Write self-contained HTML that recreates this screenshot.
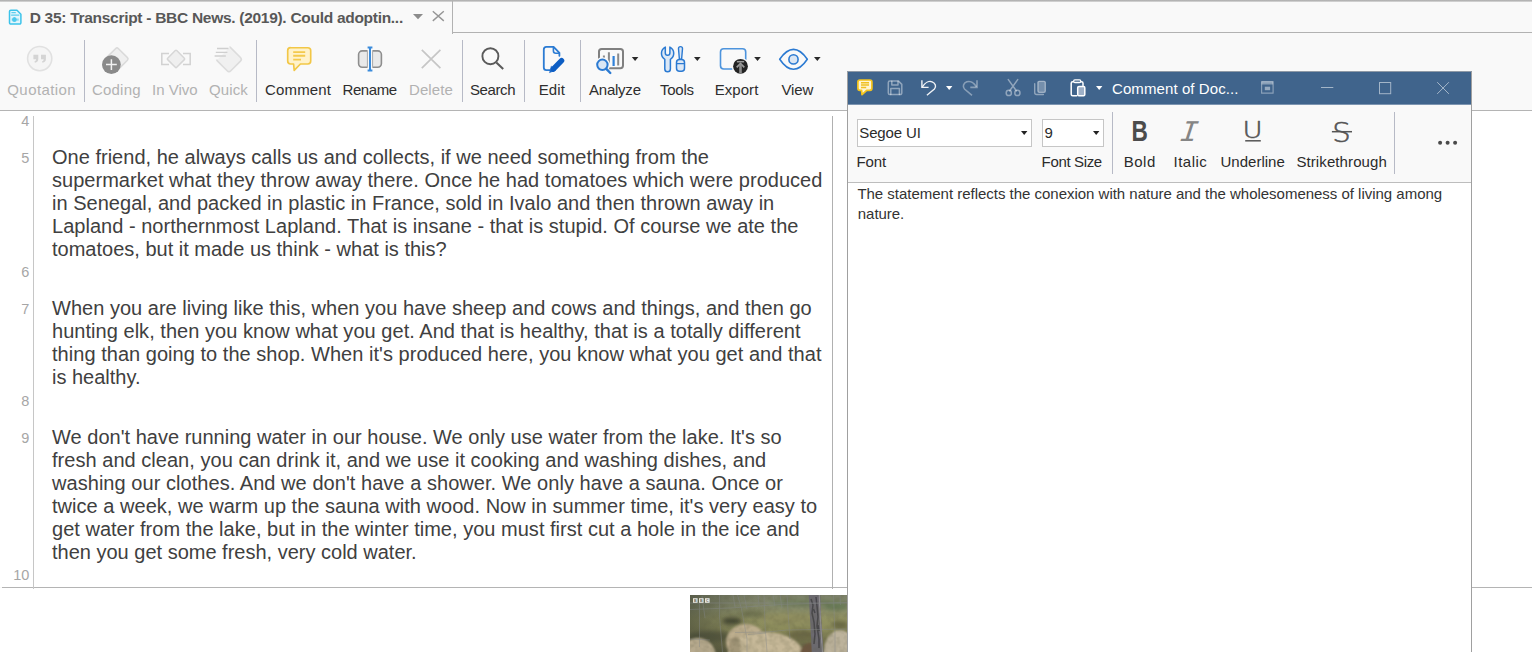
<!DOCTYPE html>
<html>
<head>
<meta charset="utf-8">
<title>D 35: Transcript</title>
<style>
html,body{margin:0;padding:0}
body{width:1532px;height:652px;overflow:hidden;position:relative;background:#f9f9f9;font-family:"Liberation Sans",sans-serif;color:#333}
.abs{position:absolute}
#topline{left:0;top:0;width:1532px;height:2px;background:linear-gradient(#a6a6a6,#dcdcdc)}
#tabtitle{top:9.4px;font-size:15.5px;font-weight:700;color:#585858;white-space:pre;line-height:18px}
#tabr{left:452px;top:1px;width:1px;height:33px;background:#b2b2b2}
#tabb{left:452px;top:32px;width:1080px;height:1px;background:#b2b2b2}
#tbline{left:0;top:110px;width:1532px;height:1px;background:#b4b4b4}
.sep{position:absolute;top:40px;width:1px;height:62px;background:#b7bac6}
.lbl{position:absolute;top:80.6px;font-size:15px;line-height:18px;white-space:pre;color:#2e2e2e}
.dis{color:#b2b2b2}
#doc{left:0;top:111px;width:847px;height:476px;background:#fff}
#docb{left:2px;top:587px;width:1530px;height:1px;background:#b4b4b4}
#below{left:0;top:588px;width:1532px;height:64px;background:#fff}
#gut{left:33px;top:116px;width:1px;height:473px;background:#c6c6c6}
#rline{left:832px;top:116px;width:1px;height:473px;background:#b0b0b0}
.ln{position:absolute;left:0;width:29.3px;text-align:right;font-size:14.5px;line-height:16px;color:#a6a6a6}
.tl{position:absolute;left:52px;font-size:20px;line-height:23px;white-space:pre;color:#404040}
#rightw{left:1472px;top:111px;width:60px;height:476px;background:#fff}
#cw{left:847px;top:71px;width:625px;height:581px;background:#fff}
#cwt{left:0;top:0;width:625px;height:33px;background:#40648c;border-top:1px solid #8e99a6;box-sizing:border-box}
#cwt2{left:0;top:33px;width:625px;height:1px;background:#7d95b1}
#cwr{left:1px;top:34px;width:623px;height:77px;background:#f9f9f9}
#cwrb{left:1px;top:111px;width:623px;height:1px;background:#bdbdbd}
#cwl{left:0;top:1px;width:1px;height:580px;background:#a0a0a0}
#cwrt{left:624px;top:1px;width:1px;height:580px;background:#a0a0a0}
.wt{position:absolute;font-size:15px;line-height:18px;white-space:pre;color:#2b2b2b}
.cb{position:absolute;top:119px;height:28px;box-sizing:border-box;background:#fff;border:1px solid #c6c6c6}
.rsep{position:absolute;top:112px;width:1px;height:62px;background:#b7bac6}
#svgo{left:0;top:0;width:1532px;height:652px;pointer-events:none}
</style>
</head>
<body>
<div id="topline" class="abs"></div>
<div id="tabtitle" class="abs" style="left:29.7px;letter-spacing:-0.287px">D 35: Transcript - BBC News. (2019). Could adoptin...</div>
<div id="tabr" class="abs"></div>
<div id="tabb" class="abs"></div>

<div class="lbl dis" style="left:7.3px;letter-spacing:.41px">Quotation</div>
<div class="sep" style="left:84px"></div>
<div class="lbl dis" style="left:92px;letter-spacing:.2px">Coding</div>
<div class="lbl dis" style="left:152px">In Vivo</div>
<div class="lbl dis" style="left:209px;letter-spacing:.12px">Quick</div>
<div class="sep" style="left:256px"></div>
<div class="lbl" style="left:265px;letter-spacing:.17px">Comment</div>
<div class="lbl" style="left:342.5px;letter-spacing:-.42px">Rename</div>
<div class="lbl dis" style="left:409px;letter-spacing:.1px">Delete</div>
<div class="sep" style="left:462px"></div>
<div class="lbl" style="left:470px;letter-spacing:-.4px">Search</div>
<div class="sep" style="left:524px"></div>
<div class="lbl" style="left:538.7px;letter-spacing:.1px">Edit</div>
<div class="sep" style="left:580px"></div>
<div class="lbl" style="left:589px;letter-spacing:-.23px">Analyze</div>
<div class="lbl" style="left:660px;letter-spacing:-.25px">Tools</div>
<div class="lbl" style="left:714.7px;letter-spacing:.06px">Export</div>
<div class="lbl" style="left:781.4px;letter-spacing:-.13px">View</div>
<div id="tbline" class="abs"></div>

<div id="doc" class="abs"></div>
<div id="below" class="abs"></div>
<div id="rightw" class="abs"></div>
<div id="docb" class="abs"></div>
<div id="gut" class="abs"></div>
<div id="rline" class="abs"></div>

<div class="ln" style="top:113px">4</div>
<div class="ln" style="top:149.5px">5</div>
<div class="ln" style="top:264px">6</div>
<div class="ln" style="top:301px">7</div>
<div class="ln" style="top:393px">8</div>
<div class="ln" style="top:430px">9</div>
<div class="ln" style="top:567px">10</div>

<div class="tl" style="top:146px;letter-spacing:0.015px">One friend, he always calls us and collects, if we need something from the</div>
<div class="tl" style="top:169px;letter-spacing:0.028px">supermarket what they throw away there. Once he had tomatoes which were produced</div>
<div class="tl" style="top:192px;letter-spacing:0.022px">in Senegal, and packed in plastic in France, sold in Ivalo and then thrown away in</div>
<div class="tl" style="top:215px;letter-spacing:0.023px">Lapland - northernmost Lapland. That is insane - that is stupid. Of course we ate the</div>
<div class="tl" style="top:238px">tomatoes, but it made us think - what is this?</div>

<div class="tl" style="top:297px;letter-spacing:0.018px">When you are living like this, when you have sheep and cows and things, and then go</div>
<div class="tl" style="top:320px;letter-spacing:0.037px">hunting elk, then you know what you get. And that is healthy, that is a totally different</div>
<div class="tl" style="top:343px;letter-spacing:0.035px">thing than going to the shop. When it's produced here, you know what you get and that</div>
<div class="tl" style="top:366px">is healthy.</div>

<div class="tl" style="top:426px;letter-spacing:0.016px">We don't have running water in our house. We only use water from the lake. It's so</div>
<div class="tl" style="top:449px;letter-spacing:0.034px">fresh and clean, you can drink it, and we use it cooking and washing dishes, and</div>
<div class="tl" style="top:472px;letter-spacing:0.048px">washing our clothes. And we don't have a shower. We only have a sauna. Once or</div>
<div class="tl" style="top:495px;letter-spacing:0.026px">twice a week, we warm up the sauna with wood. Now in summer time, it's very easy to</div>
<div class="tl" style="top:518px;letter-spacing:0.020px">get water from the lake, but in the winter time, you must first cut a hole in the ice and</div>
<div class="tl" style="top:541px">then you get some fresh, very cold water.</div>

<svg class="abs" style="left:690px;top:595px" width="157" height="57" viewBox="0 0 157 57">
<defs>
<linearGradient id="gr" x1="0" y1="0" x2="0" y2="1">
<stop offset="0" stop-color="#7c816a"/><stop offset=".2" stop-color="#858a6c"/><stop offset=".42" stop-color="#929362"/><stop offset=".62" stop-color="#8a8a5a"/><stop offset=".8" stop-color="#74734c"/><stop offset="1" stop-color="#5c5b3e"/>
</linearGradient>
<linearGradient id="lf" x1="0" y1="0" x2="1" y2="0">
<stop offset="0" stop-color="#3c4034" stop-opacity=".55"/><stop offset=".28" stop-color="#4a4e3c" stop-opacity=".2"/><stop offset=".5" stop-color="#4a4e3c" stop-opacity="0"/>
</linearGradient>
<filter id="b1" x="-20%" y="-20%" width="140%" height="140%"><feGaussianBlur stdDeviation="1.1"/></filter>
<filter id="b2" x="-20%" y="-20%" width="140%" height="140%"><feGaussianBlur stdDeviation="2.2"/></filter>
<filter id="b0" x="-20%" y="-20%" width="140%" height="140%"><feGaussianBlur stdDeviation=".45"/></filter>
<filter id="nz" x="0" y="0" width="100%" height="100%"><feTurbulence type="fractalNoise" baseFrequency=".16" numOctaves="2" seed="4" result="n"/><feColorMatrix in="n" type="matrix" values="0 0 0 0 .1  0 0 0 0 .1  0 0 0 0 .05  .9 .9 .9 0 -1.1"/></filter>
</defs>
<rect width="157" height="57" fill="url(#gr)"/>
<g filter="url(#b2)">
<ellipse cx="62" cy="19" rx="14" ry="2.5" fill="#6a6e4c"/>
<ellipse cx="118" cy="8" rx="40" ry="3.5" fill="#6f7d5c"/>
<ellipse cx="100" cy="24" rx="30" ry="5" fill="#8f8d5f"/>
<ellipse cx="42" cy="26" rx="10" ry="3.2" fill="#3a3c2c"/>
<ellipse cx="146" cy="12" rx="12" ry="3" fill="#667a55"/>
<ellipse cx="112" cy="40" rx="14" ry="5" fill="#6a6844"/>
<ellipse cx="20" cy="42" rx="22" ry="6" fill="#595a3d"/>
<ellipse cx="150" cy="30" rx="8" ry="4" fill="#6b6a45"/>
</g>
<rect width="157" height="57" fill="url(#lf)"/>
<g filter="url(#b1)">
<ellipse cx="56" cy="47" rx="20" ry="18" fill="#bdae8e"/>
<ellipse cx="76" cy="63" rx="39" ry="26" fill="#c6b898"/>
<ellipse cx="8" cy="62" rx="18" ry="19" fill="#b7aa8e"/>
<ellipse cx="150" cy="60" rx="17" ry="25" fill="#bdb39c"/>
<ellipse cx="120" cy="58" rx="10" ry="10" fill="#6d5640"/>
<ellipse cx="45" cy="52" rx="6" ry="10" fill="#8b7f63" opacity=".6"/>
</g>
<g filter="url(#b0)">
<path d="M118.7 0h11.6l1 24 2.2 33h-11.8l-1.5-30z" fill="#6c6a6f"/>
<path d="M121 4l2 6-1 8 2 9 1 12-1 10M126 2l1 9 1 11-1 9 2 13 0 9M123.5 14l1.5 4M128 30l1 6" stroke="#3e3d42" stroke-width="1.5" fill="none" opacity=".8"/>
<path d="M129.3 0l1 24 2.2 33" stroke="#a5a3a6" stroke-width="1.2" fill="none" opacity=".7"/>
</g>
<rect width="157" height="57" filter="url(#nz)" opacity=".28"/>
<g stroke="#85888a" stroke-width=".7" fill="none" opacity=".6" filter="url(#b0)">
<path d="M9.5 8v44M29.5 0v22l3 35M47.5 0l4 14 5.5 30v13M74 0l1 30 2 27M97 0l1.5 24 1.5 20M143.5 0l1.5 40v17M12 1l3 22M54 0l3 14M83 0l2 11M90 0l2 13M43 0l2 12M68 0l1 10M150 0l.5 10"/>
<path d="M0 14.5l40-1.5 50-3.5 67-2M0 8h157M45 37.5l32-.5 20-2 60-1M0 44l20 1M58 39.5l18-1.5"/>
</g>
<g font-family="Liberation Sans,sans-serif" font-size="3.6" font-weight="700" text-anchor="middle" fill="#6a6c5c">
<rect x="3" y="3.2" width="4.6" height="4.6" fill="#e9e9e3"/><text x="5.3" y="6.9">B</text>
<rect x="9" y="3.2" width="4.6" height="4.6" fill="#e9e9e3"/><text x="11.3" y="6.9">B</text>
<rect x="15" y="3.2" width="4.6" height="4.6" fill="#e9e9e3"/><text x="17.3" y="6.9">C</text>
</g>
</svg>


<div id="cw" class="abs">
<div id="cwt" class="abs"></div>
<div id="cwt2" class="abs"></div>
<div id="cwr" class="abs"></div>
<div id="cwrb" class="abs"></div>
<div id="cwl" class="abs"></div>
<div id="cwrt" class="abs"></div>
</div>
<div class="wt" style="left:1112px;top:79.6px;color:#fff;letter-spacing:.09px">Comment of Doc...</div>
<div class="cb" style="left:857px;width:175px"></div>
<div class="cb" style="left:1042px;width:62px"></div>
<div class="wt" style="left:859.3px;top:124.1px;letter-spacing:-.14px">Segoe UI</div>
<div class="wt" style="left:1044.5px;top:124.1px">9</div>
<div class="wt" style="left:856.6px;top:153.3px;letter-spacing:-.17px">Font</div>
<div class="wt" style="left:1041.6px;top:153.3px;letter-spacing:-.35px">Font Size</div>
<div class="rsep" style="left:1112px"></div>
<div class="wt" style="left:1123.8px;top:152.5px;letter-spacing:.47px">Bold</div>
<div class="wt" style="left:1173.5px;top:152.5px;letter-spacing:.5px">Italic</div>
<div class="wt" style="left:1220.5px;top:152.5px;letter-spacing:.01px">Underline</div>
<div class="wt" style="left:1296.4px;top:152.5px;letter-spacing:.1px">Strikethrough</div>
<div class="rsep" style="left:1394px"></div>
<div class="wt" style="left:857.4px;top:184.6px;letter-spacing:-.017px;color:#333">The statement reflects the conexion with nature and the wholesomeness of living among</div>
<div class="wt" style="left:857.8px;top:204.7px;letter-spacing:-.035px;color:#333">nature.</div>

<svg id="svgo" class="abs" width="1532" height="652" viewBox="0 0 1532 652" fill="none" stroke-linecap="round" stroke-linejoin="round">
<!-- tab doc icon -->
<path d="M10.8 10.3h6.2l3.9 3.9v8.6a1.3 1.3 0 0 1-1.3 1.3h-8.8a1.3 1.3 0 0 1-1.3-1.3v-11.2a1.3 1.3 0 0 1 1.3-1.3z" fill="#e3f6fc" stroke="#3cc3ea" stroke-width="1.5"/>
<path d="M11.8 12.7h3.6" stroke="#3cc3ea" stroke-width="1"/>
<path d="M11.6 15.1h7.2" stroke="#5ccdee" stroke-width="1.4"/>
<path d="M11.6 19.6h7.2" stroke="#8fdcf3" stroke-width="2.2" stroke-linecap="butt"/>
<ellipse cx="14.4" cy="19.6" rx="2.3" ry="2.5" fill="#4cc8ec"/>
<!-- tab dropdown and close -->
<path d="M413 14.1h10l-5 5.1z" fill="#8c8c8c"/>
<path d="M432.8 11.3l11 9.6M443.8 11.3l-11 9.6" stroke="#969696" stroke-width="1.4" stroke-linecap="butt"/>

<!-- Quotation -->
<circle cx="39.7" cy="58.6" r="12.1" fill="#f5f5f5" stroke="#e1e1e1" stroke-width="1.6"/>
<path d="M33.4 54.7h4.9v4.3q0 3.2-3.4 3.8l-.5-1.3q1.6-.5 1.7-2.3h-2.7z" fill="#d4d4d4"/>
<path d="M41 54.7h4.9v4.3q0 3.2-3.4 3.8l-.5-1.3q1.6-.5 1.7-2.3h-2.7z" fill="#d4d4d4"/>

<!-- Coding -->
<rect x="-8.3" y="-8.3" width="16.6" height="16.6" rx="1.8" transform="translate(117 58.9) rotate(45)" fill="#efefef" stroke="#dadada" stroke-width="1.5"/>
<circle cx="111.4" cy="64.6" r="9.4" fill="#8a8a8a"/>
<path d="M106 64.6h10.8M111.400 59.2v10.8" stroke="#f2f2f2" stroke-width="1.5" stroke-linecap="butt"/>

<!-- In Vivo -->
<path d="M169 53.4h-7.2v11h7.2M183 53.4h7.2v11h-7.2" stroke="#d2d2d2" stroke-width="1.5" stroke-linecap="butt" stroke-linejoin="miter"/>
<rect x="-6.4" y="-6.4" width="12.8" height="12.8" rx="1" transform="translate(176 58.9) rotate(45)" fill="#efefef" stroke="#d6d6d6" stroke-width="1.5"/>

<!-- Quick -->
<rect x="-9.4" y="-9.4" width="18.8" height="18.8" rx="2.6" transform="translate(229 59.3) rotate(45)" fill="#f0f0f0" stroke="#dcdcdc" stroke-width="1.6"/>
<path d="M212 44.5h17.5v3l-12 12h-5.5z" fill="#f9f9f9"/>
<path d="M217 48.5h11.5M215.8 52.3h11.6M214.6 56h11.2" stroke="#cfcfcf" stroke-width="1.3" stroke-linecap="butt"/>

<!-- Comment -->
<path d="M290.6 47.7h17.2a2.9 2.9 0 0 1 2.9 2.9v10.5a2.9 2.9 0 0 1-2.9 2.9h-7.4l-6.2 6.3-.6-6.3h-3a2.9 2.9 0 0 1-2.9-2.9v-10.5a2.9 2.9 0 0 1 2.9-2.9z" fill="#fff2cb" stroke="#f2c747" stroke-width="1.65"/>
<path d="M293.2 52.1h12M293.2 55.8h12M293.2 59.6h7.8" stroke="#f4c94c" stroke-width="1.9" stroke-linecap="butt"/>

<!-- Rename -->
<rect x="358.6" y="50.9" width="22.8" height="16.3" rx="3.6" fill="#e9e9e9" stroke="#8e8e8e" stroke-width="1.6"/>
<rect x="367.6" y="49" width="4.8" height="20" fill="#f9f9f9" stroke="none"/>
<path d="M367.400 51.2v15.7M372.600 51.2v15.7" stroke="#a8a8a8" stroke-width="1" stroke-linecap="butt"/>
<path d="M370 47.6v22.8M367.6 47.6h4.8M367.6 70.4h4.8" stroke="#3b8bdb" stroke-width="2" stroke-linecap="butt"/>

<!-- Delete -->
<path d="M421.8 49.8l18.6 18.3M440.4 49.8l-18.6 18.3" stroke="#c6c6c6" stroke-width="1.7" stroke-linecap="butt"/>

<!-- Search -->
<circle cx="490.4" cy="56.2" r="8" stroke="#5a5a5a" stroke-width="1.9"/>
<path d="M496.3 62.4l6.9 6.6" stroke="#5a5a5a" stroke-width="2.1" stroke-linecap="butt"/>

<!-- Edit -->
<path d="M550 70.2h-3.6a2.6 2.6 0 0 1-2.6-2.6v-18.2a2.6 2.6 0 0 1 2.6-2.6h7.2l5.8 6v3" stroke="#2b7bd3" stroke-width="1.8"/>
<path d="M553.4 47.2v3.6a2.4 2.4 0 0 0 2.4 2.4h3.4" stroke="#2b7bd3" stroke-width="1.6"/>
<path d="M561.6 60.6l-8.3 8.6" stroke="#0d5ec4" stroke-width="5.4"/>
<path d="M551.6 66.4l4 3.7-5.8 2.4z" fill="#0d5ec4" stroke="#0d5ec4" stroke-width=".6"/>

<!-- Analyze -->
<rect x="599" y="49" width="24" height="19.2" rx="2.6" stroke="#808080" stroke-width="2"/>
<path d="M603.9 55.6v3M608.9 52.2v11M618.2 53.6v12" stroke="#8a8a8a" stroke-width="2" stroke-linecap="butt"/>
<path d="M613.6 56v10" stroke="#2f80d8" stroke-width="2.2" stroke-linecap="butt"/>
<circle cx="602.4" cy="64.8" r="7.6" fill="#f9f9f9"/>
<circle cx="602.4" cy="64.8" r="5.2" fill="#dae6f4" stroke="#2b7ad2" stroke-width="2"/>
<path d="M606.3 68.8l4 4.2" stroke="#2b7ad2" stroke-width="2.4"/>
<path d="M631.8 57.1h6.6l-3.3 3.8z" fill="#2a2a2a"/>

<!-- Tools -->
<path d="M665.3 47.1V53a2.3 2.3 0 0 0 4.6 0V47.1a7 7 0 0 1 .5 12.2V68.9a2.8 2.8 0 0 1-5.6 0V59.3a7 7 0 0 1 .5-12.2z" fill="#dce8f6" stroke="#2b7ad2" stroke-width="1.5"/>
<path d="M678.5 48.6a2 2 0 0 1 4 0l-.9 10.6h-2.2z" fill="#dce8f6" stroke="#2b7ad2" stroke-width="1.4"/>
<rect x="676.5" y="59.4" width="8" height="11.8" rx="3" fill="#dce8f6" stroke="#2b7ad2" stroke-width="1.5"/>
<path d="M676.8 63.6h7.4" stroke="#2b7ad2" stroke-width="1.3"/>
<path d="M694 57.1h6.6l-3.3 3.8z" fill="#2a2a2a"/>

<!-- Export -->
<rect x="720.5" y="48.8" width="25.2" height="20.2" rx="3.2" stroke="#4d94dd" stroke-width="1.6"/>
<circle cx="740.5" cy="66.3" r="8.8" fill="#f9f9f9"/>
<circle cx="740.5" cy="66.3" r="7.4" fill="#232323"/>
<path d="M736.9 61.7h7.2" stroke="#9c9c9c" stroke-width="1.5" stroke-linecap="butt"/>
<path d="M736.7 67.4l3.8-3.9 3.8 3.9" stroke="#9c9c9c" stroke-width="1.7" stroke-linecap="butt" stroke-linejoin="miter"/>
<path d="M740.5 64.5v9" stroke="#8c8c8c" stroke-width="2.6" stroke-linecap="butt"/>
<path d="M754.2 57.1h6.6l-3.3 3.8z" fill="#2a2a2a"/>

<!-- View -->
<path d="M779.7 59.3C785 51.5 789.5 49.4 793.5 49.4S802 51.5 807.3 59.3C802 67.2 797.5 69.3 793.5 69.3S785 67.2 779.7 59.3z" stroke="#2b7ad2" stroke-width="1.6"/>
<circle cx="793.5" cy="59.4" r="4.6" fill="#dae6f4" stroke="#2b7ad2" stroke-width="1.6"/>
<path d="M814 57.1h6.6l-3.3 3.8z" fill="#2a2a2a"/>
<!-- comment window: title bar icons -->
<path d="M859.9 80h10a2 2 0 0 1 2 2v6.3a2 2 0 0 1-2 2h-3.2l-4.7 4.4-.4-4.4h-1.7a2 2 0 0 1-2-2v-6.3a2 2 0 0 1 2-2z" fill="#fff5d4" stroke="#f3c41d" stroke-width="1.7"/>
<path d="M861 82.7h8M861 85.1h8M861 87.5h5.2" stroke="#f0c020" stroke-width="1.5" stroke-linecap="butt"/>
<g stroke="#fff" stroke-opacity=".42" stroke-width="1.5">
<path d="M889.8 81.1h8.7l3.3 3.3v8.7a1.5 1.5 0 0 1-1.5 1.5h-10.5a1.5 1.5 0 0 1-1.5-1.5v-10.5a1.5 1.5 0 0 1 1.5-1.5z"/>
<path d="M891.8 81.3v3.6h6.2v-3.6M890.8 94.4v-5.8h8.6v5.8"/>
</g>
<g stroke="#fff" stroke-opacity=".92" stroke-width="1.4" stroke-linecap="butt" stroke-linejoin="miter">
<path d="M921.9 80.3v7.1h6.7"/>
<path d="M922.4 86.9C925 82.6 929 80.7 932.1 81.8c3.4 1.3 4.5 4.8 2.3 7.2L926.9 95.3"/>
</g>
<path d="M946 86.1h6.4l-3.2 3.9z" fill="#fff"/>
<g stroke="#fff" stroke-opacity=".38" stroke-width="1.6" stroke-linecap="butt" stroke-linejoin="miter">
<path d="M977 80.3v7.1h-6.7"/>
<path d="M976.5 86.9C973.9 82.6 969.9 80.7 966.8 81.8c-3.4 1.3-4.5 4.8-2.3 7.2L972 95.3"/>
</g>
<g stroke="#fff" stroke-opacity=".42" stroke-width="1.5">
<path d="M1008.3 79.6l8 11.2M1017.7 79.6l-8 11.2"/>
<circle cx="1008.8" cy="92.9" r="2.6"/>
<circle cx="1017.4" cy="92.9" r="2.6"/>
</g>
<rect x="1037.9" y="81.4" width="7.4" height="10.9" rx="1.2" fill="#fff" fill-opacity=".28" stroke="#fff" stroke-opacity=".45" stroke-width="1.3"/>
<path d="M1034.7 83.8v8.7a2 2 0 0 0 2 2h6.7" stroke="#fff" stroke-opacity=".42" stroke-width="1.4"/>
<g stroke="#fff" stroke-width="1.5">
<path d="M1073 81.7h-.3a1.5 1.5 0 0 0-1.5 1.5v11a1.5 1.5 0 0 0 1.5 1.5h4"/>
<path d="M1081.2 81.7h.3a1.5 1.5 0 0 1 1.5 1.5v2.3"/>
<rect x="1073.6" y="79.9" width="7.2" height="2.6" rx="1.3" stroke-width="1.3"/>
<rect x="1077.7" y="86.6" width="7.1" height="9.2" rx="1.2" fill="#9eb0c7"/>
</g>
<path d="M1096 86.1h6.4l-3.2 3.9z" fill="#fff"/>
<!-- window buttons -->
<rect x="1261.6" y="81.6" width="11.5" height="11.6" stroke="#fff" stroke-opacity=".38" stroke-width="1.2"/>
<rect x="1261.6" y="81.6" width="11.5" height="2.9" fill="#fff" fill-opacity=".38"/>
<rect x="1264.8" y="86.7" width="5.3" height="3.5" fill="#fff" fill-opacity=".45"/>
<g stroke="#fff" stroke-opacity=".52" stroke-width="1" stroke-linecap="butt" stroke-linejoin="miter">
<path d="M1321 87.5h12.3"/>
<rect x="1379.5" y="82.5" width="11.2" height="11.2"/>
<path d="M1437.2 82.2l11.7 11.7M1448.9 82.2l-11.7 11.7"/>
</g>
<!-- combobox arrows -->
<path d="M1021 131.1h6.4l-3.2 3.9z" fill="#222"/>
<path d="M1093 131.1h6.4l-3.2 3.9z" fill="#222"/>
<!-- B I U S -->
<text x="0" y="0" transform="translate(1131.6 141) scale(.77 1)" font-family="Liberation Sans,sans-serif" font-weight="700" font-size="29.4" fill="#4c4c4c" stroke="none">B</text>
<text x="0" y="0" transform="translate(1177.6 141) skewX(-18)" font-family="Liberation Mono,monospace" font-size="30" fill="#858585" stroke="none">I</text>
<text x="0" y="0" transform="translate(1242.5 138.2) scale(1.17 1)" font-family="DejaVu Sans,sans-serif" font-weight="200" font-size="23.5" fill="#555" stroke="#555" stroke-width=".55">U</text>
<path d="M1245.2 140.8h15.6" stroke="#555" stroke-width="1.5" stroke-linecap="butt"/>
<text x="0" y="0" transform="translate(1332.3 141.5) scale(1.08 1)" font-family="DejaVu Sans,sans-serif" font-weight="200" font-size="27" fill="#555" stroke="#555" stroke-width=".55">S</text>
<path d="M1331.9 131.7h20.1" stroke="#555" stroke-width="1.5" stroke-linecap="butt"/>
<!-- more dots -->
<circle cx="1440.1" cy="142.8" r="2" fill="#4a4a4a"/>
<circle cx="1447.6" cy="142.8" r="2" fill="#4a4a4a"/>
<circle cx="1455.1" cy="142.8" r="2" fill="#4a4a4a"/>

</svg>

</body>
</html>
